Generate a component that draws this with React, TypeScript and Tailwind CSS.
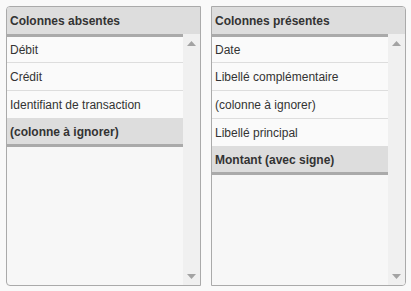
import React from "react";

type Item = { label: string; selected?: boolean };

function Panel({ title, items, side }: { title: string; items: Item[]; side: "l" | "r" }) {
  return (
    <div
      className={`w-[195px] h-[280px] border border-[#aaaaaa] bg-[#f7f7f7] flex flex-col overflow-hidden ${
        side === "l" ? "rounded-l-[4px]" : "rounded-r-[4px]"
      }`}
    >
      <div className="h-[27px] shrink-0 bg-[#dddddd] flex items-center px-[3px] font-bold text-[12px] text-[#333333]">
        {title}
      </div>
      <div className="flex flex-1 min-h-0">
        <div className="flex-1 flex flex-col border-t-[3px] border-[#aaaaaa]">
          {items.map((it, i) => (
            <div
              key={i}
              className={`flex items-center px-[3px] text-[12px] shrink-0 ${
                i === 0 ? "h-[26px]" : "h-[28px]"
              } ${
                it.selected
                  ? "bg-[#dddddd] font-bold text-[#333333] border-b-[3px] border-[#aaaaaa]"
                  : "bg-[#fafafa] text-[#333333] border-b border-[#dddddd]"
              }`}
            >
              {it.label}
            </div>
          ))}
        </div>
        <div className="w-[17px] shrink-0 bg-[#f0f0f0] flex flex-col items-center justify-between pt-[7px] pb-[6px]">
          <svg width="9" height="5" viewBox="0 0 9 5">
            <path d="M0 5 L4.5 0 L9 5 Z" fill="#a3a3a3" />
          </svg>
          <svg width="9" height="5" viewBox="0 0 9 5">
            <path d="M0 0 L4.5 5 L9 0 Z" fill="#a3a3a3" />
          </svg>
        </div>
      </div>
    </div>
  );
}

export default function App() {
  return (
    <div
      className="w-[411px] h-[291px] bg-[#f9f9f9] flex gap-[10px] pl-[6px] pt-[6px]"
      style={{ fontFamily: '"Liberation Sans", Arial, sans-serif' }}
    >
      <Panel
        side="l"
        title="Colonnes absentes"
        items={[
          { label: "Débit" },
          { label: "Crédit" },
          { label: "Identifiant de transaction" },
          { label: "(colonne à ignorer)", selected: true },
        ]}
      />
      <Panel
        side="r"
        title="Colonnes présentes"
        items={[
          { label: "Date" },
          { label: "Libellé complémentaire" },
          { label: "(colonne à ignorer)" },
          { label: "Libellé principal" },
          { label: "Montant (avec signe)", selected: true },
        ]}
      />
    </div>
  );
}
